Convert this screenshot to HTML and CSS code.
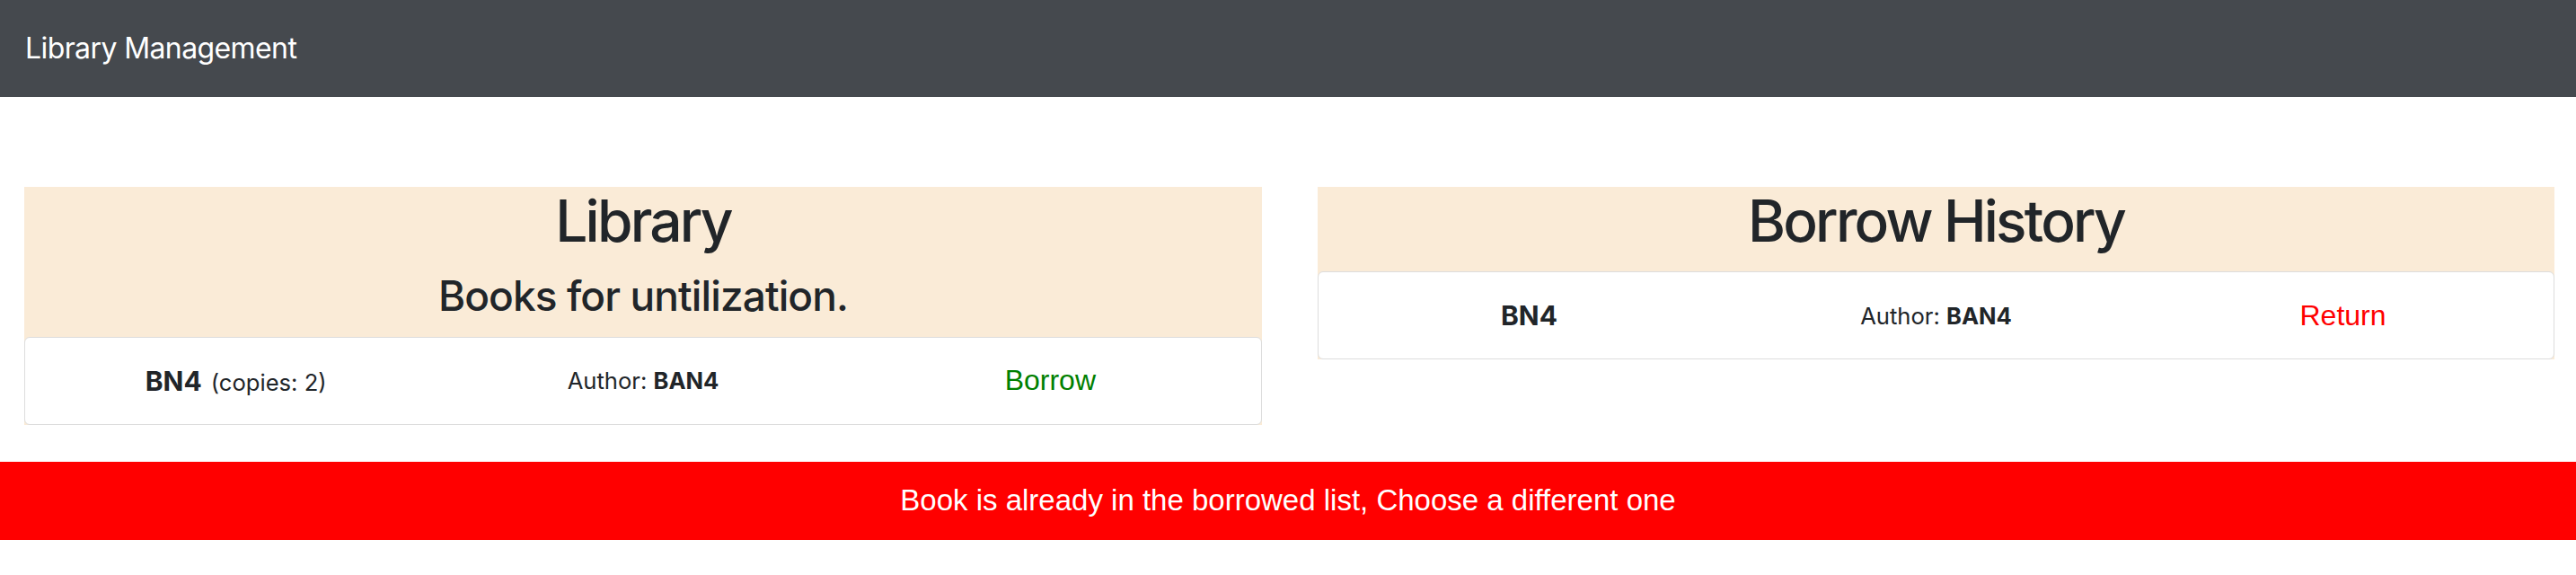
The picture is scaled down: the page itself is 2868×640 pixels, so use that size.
FILE: index.html
```html
<!DOCTYPE html>
<html lang="en">
<head>
<meta charset="utf-8">
<title>Library Management</title>
<link rel="stylesheet" href="styles.css">
</head>
<body>
<nav class="navbar">
  <span class="brand">Library Management</span>
</nav>
<main class="panels">
  <section class="card">
    <h1 class="card-title">Library</h1>
    <h3 class="card-subtitle">Books for untilization.</h3>
    <div class="book-row">
      <div class="cell"><span class="book-name">BN4</span><span class="copies">(copies: 2)</span></div>
      <div class="cell author">Author:&nbsp;<b>BAN4</b></div>
      <div class="cell"><button class="action borrow">Borrow</button></div>
    </div>
  </section>
  <section class="card">
    <h1 class="card-title">Borrow History</h1>
    <div class="book-row">
      <div class="cell"><span class="book-name">BN4</span></div>
      <div class="cell author">Author:&nbsp;<b>BAN4</b></div>
      <div class="cell"><button class="action return">Return</button></div>
    </div>
  </section>
</main>
<div class="alert">Book is already in the borrowed list, Choose a different one</div>
</body>
</html>
```
FILE: styles.css
```css
body {
  margin: 0;
  font-family: Inter, "Noto Sans", sans-serif;
  color: #212529;
  background: #ffffff;
}

.navbar {
  height: 108px;
  background: #45494e;
  display: flex;
  align-items: center;
  padding-left: 28px;
}

.brand {
  color: #ffffff;
  font-size: 32px;
  line-height: 1.5;
  letter-spacing: -0.6px;
}

.panels {
  margin-top: 100px;
  padding: 0 24px 0 27px;
  display: grid;
  grid-template-columns: 1378px 1377px;
  column-gap: 62px;
  align-items: start;
}

.card {
  background: #faebd7;
  text-align: center;
}

.card-title {
  margin: 0 0 17.5px;
  font-size: 64px;
  font-weight: 500;
  line-height: 1.2;
  letter-spacing: -2.8px;
}

.card-subtitle {
  margin: 0 0 17.5px;
  font-size: 46px;
  font-weight: 500;
  line-height: 1.2;
  letter-spacing: -0.9px;
}

.book-row {
  box-sizing: border-box;
  height: 98px;
  background: #ffffff;
  border: 1px solid #dddddd;
  border-radius: 6px;
  padding: 0 8px;
  display: grid;
  grid-template-columns: repeat(3, 1fr);
  align-items: center;
}

.cell {
  display: flex;
  justify-content: center;
  align-items: baseline;
}

.book-name {
  font-size: 30px;
  font-weight: 700;
}

.copies {
  font-size: 25.6px;
  margin-left: 10px;
}

.author {
  font-size: 25.6px;
}

.author b {
  font-weight: 700;
}

.action {
  font-family: "Liberation Sans", Arial, sans-serif;
  font-size: 32px;
  background: none;
  border: none;
  padding: 0;
  cursor: pointer;
}

.borrow {
  color: #008000;
}

.return {
  color: #ff0000;
}

.alert {
  margin-top: 41px;
  height: 87px;
  background: #ff0000;
  color: #ffffff;
  font-family: "Liberation Sans", Arial, sans-serif;
  font-size: 33px;
  display: flex;
  align-items: center;
  justify-content: center;
}
```
